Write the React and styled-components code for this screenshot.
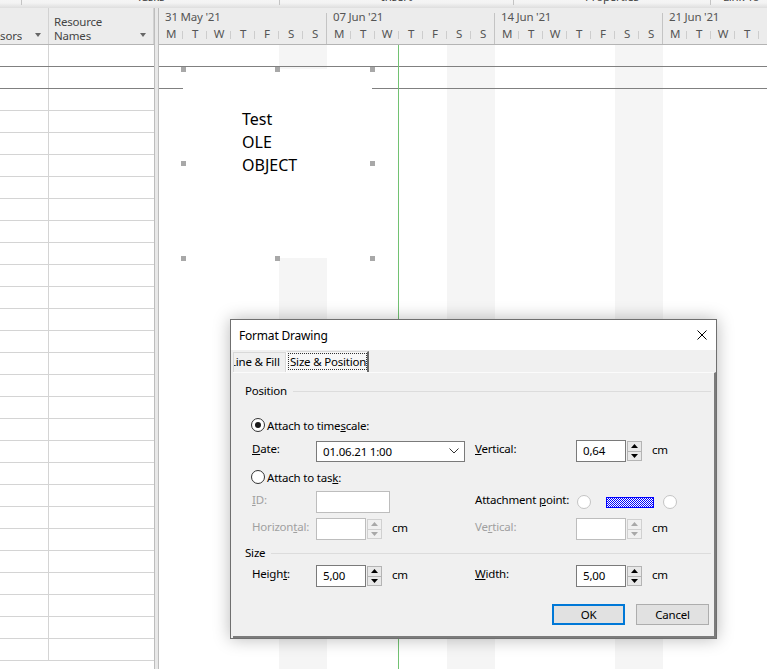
import React from 'react';
import styled, { createGlobalStyle } from 'styled-components';

const DAYS = ['M', 'T', 'W', 'T', 'F', 'S', 'S'];
const WEEKS = ["31 May '21", "07 Jun '21", "14 Jun '21", "21 Jun '21"];
const ROW_COUNT = 28;

const GlobalStyle = createGlobalStyle`
  html, body { margin: 0; padding: 0; }
  body {
    font-family: "Noto Sans", "Open Sans", sans-serif;
    background: #fff;
    color: #000;
  }
`;

function SpinButtons({ disabled }) {
  return (
    <Spin $disabled={disabled}>
      <SpinBtn $disabled={disabled}>
        <svg width="7" height="4" viewBox="0 0 7 4"><path d="M0 4 L3.5 0 L7 4 Z" fill="currentColor" /></svg>
      </SpinBtn>
      <SpinBtn $disabled={disabled}>
        <svg width="7" height="4" viewBox="0 0 7 4"><path d="M0 0 L7 0 L3.5 4 Z" fill="currentColor" /></svg>
      </SpinBtn>
    </Spin>
  );
}

function Handles() {
  const spots = [
    [0, 0], [50, 0], [100, 0],
    [0, 50], [100, 50],
    [0, 100], [50, 100], [100, 100],
  ];
  return spots.map(([x, y]) => <Handle key={`${x}-${y}`} $x={x} $y={y} />);
}

export default function App() {
  return (
    <>
      <GlobalStyle />
      <Page>
        <Ribbon>
          <RibbonGroup $w={22} />
          <RibbonGroup $w={258}><RibbonLabel>Tasks</RibbonLabel></RibbonGroup>
          <RibbonGroup $w={234}><RibbonLabel>Insert</RibbonLabel></RibbonGroup>
          <RibbonGroup $w={197}><RibbonLabel>Properties</RibbonLabel></RibbonGroup>
          <RibbonGroup $w={80} $left><RibbonLabel>Link To</RibbonLabel></RibbonGroup>
        </Ribbon>

        <Main>
          <Table>
            <TableHeader>
              <HeaderCell $w={49}>
                <ClipText><span>Predecessors</span></ClipText>
                <SortArrow />
              </HeaderCell>
              <HeaderCell $w={105}>
                <span>Resource<br />Names</span>
                <SortArrow />
              </HeaderCell>
            </TableHeader>
            {Array.from({ length: ROW_COUNT }, (_, i) => (
              <TableRow key={i} $dark={i < 2}>
                <Cell $w={49} />
                <Cell $w={105} />
              </TableRow>
            ))}
          </Table>

          <Splitter />

          <Gantt>
            <Timescale>
              {WEEKS.map((w) => (
                <Week key={w}>
                  <WeekLabel>{w}</WeekLabel>
                  <DayRow>
                    {DAYS.map((d, i) => (
                      <Day key={i} $last={i === 6}>{d}</Day>
                    ))}
                  </DayRow>
                </Week>
              ))}
            </Timescale>
            <GanttBody>
              <GanttLine />
              <GanttLine />
              <TodayLine />
              <OleObject>
                <OleText>Test<br />OLE<br />OBJECT</OleText>
                <Handles />
              </OleObject>
            </GanttBody>
          </Gantt>
        </Main>

        <Dialog>
          <TitleBar>
            <span>Format Drawing</span>
            <svg width="10" height="10" viewBox="0 0 10 10">
              <path d="M0.5 0.5 L9.5 9.5 M9.5 0.5 L0.5 9.5" stroke="#000" strokeWidth="1" />
            </svg>
          </TitleBar>
          <DialogBody>
            <TabStrip>
              <Tab>Line &amp; Fill</Tab>
              <Tab $active><FocusRect>Size &amp; Position</FocusRect></Tab>
            </TabStrip>
            <TabPanel>
              <GroupHeader $mt={11}>
                <span>Position</span>
                <GroupLine />
              </GroupHeader>

              <RadioRow $mt={17}>
                <Radio $checked />
                <span>Attach to time<u>s</u>cale:</span>
              </RadioRow>

              <FormRow $mt={5}>
                <FieldLabel><u>D</u>ate:</FieldLabel>
                <Combo>
                  <span>01.06.21 1:00</span>
                  <svg width="10" height="6" viewBox="0 0 10 6">
                    <path d="M0.5 0.5 L5 5 L9.5 0.5" fill="none" stroke="#333" strokeWidth="1" />
                  </svg>
                </Combo>
                <FieldLabel><u>V</u>ertical:</FieldLabel>
                <Control>
                  <TextBox $w={50}>0,64</TextBox>
                  <SpinButtons />
                  <Unit>cm</Unit>
                </Control>
              </FormRow>

              <RadioRow $mt={5}>
                <Radio />
                <span>Attach to tas<u>k</u>:</span>
              </RadioRow>

              <FormRow $mt={4}>
                <FieldLabel $disabled><u>I</u>D:</FieldLabel>
                <Control><TextBox $w={74} $disabled /></Control>
                <FieldLabel>Attachment <u>p</u>oint:</FieldLabel>
                <Control>
                  <Radio $light $ml={1} />
                  <Hatch />
                  <Radio $light $ml={9} />
                </Control>
              </FormRow>

              <FormRow $mt={5}>
                <FieldLabel $disabled>Horizon<u>t</u>al:</FieldLabel>
                <Control>
                  <TextBox $w={50} $disabled />
                  <SpinButtons disabled />
                  <Unit>cm</Unit>
                </Control>
                <FieldLabel $disabled>Ve<u>r</u>tical:</FieldLabel>
                <Control>
                  <TextBox $w={50} $disabled />
                  <SpinButtons disabled />
                  <Unit>cm</Unit>
                </Control>
              </FormRow>

              <GroupHeader $mt={6}>
                <span>Size</span>
                <GroupLine />
              </GroupHeader>

              <FormRow $mt={5}>
                <FieldLabel>Heigh<u>t</u>:</FieldLabel>
                <Control>
                  <TextBox $w={50}>5,00</TextBox>
                  <SpinButtons />
                  <Unit>cm</Unit>
                </Control>
                <FieldLabel><u>W</u>idth:</FieldLabel>
                <Control>
                  <TextBox $w={50}>5,00</TextBox>
                  <SpinButtons />
                  <Unit>cm</Unit>
                </Control>
              </FormRow>

              <ButtonRow>
                <Button $primary>OK</Button>
                <Button>Cancel</Button>
              </ButtonRow>
            </TabPanel>
          </DialogBody>
        </Dialog>
      </Page>
    </>
  );
}

const Page = styled.div`
  position: relative;
  width: 767px;
  height: 669px;
  overflow: hidden;
  display: flex;
  flex-direction: column;
  font-size: 11.5px;
  letter-spacing: -0.2px;
`;

/* ribbon bottom edge */
const Ribbon = styled.div`
  height: 8px;
  flex-shrink: 0;
  display: flex;
  overflow: hidden;
  background: linear-gradient(to bottom, #f5f5f5 0, #f3f3f3 3px, #dedede 8px);
`;

const RibbonGroup = styled.div`
  width: ${(p) => p.$w}px;
  flex-shrink: 0;
  height: 5px;
  border-right: 1px solid #c4c4c4;
  box-sizing: border-box;
  display: flex;
  justify-content: ${(p) => (p.$left ? 'flex-start' : 'center')};
  padding-left: ${(p) => (p.$left ? '12px' : '0')};
`;

const RibbonLabel = styled.span`
  margin-top: -9px;
  line-height: 12px;
  color: #444;
  white-space: nowrap;
`;

const Main = styled.div`
  flex: 1;
  min-height: 0;
  display: flex;
  overflow: hidden;
`;

const Table = styled.div`
  width: 154px;
  flex-shrink: 0;
  display: flex;
  flex-direction: column;
  overflow: hidden;
`;

const TableHeader = styled.div`
  height: 37px;
  flex-shrink: 0;
  display: flex;
  background: #ececec;
  border-bottom: 1px solid #b4b4b4;
  box-sizing: border-box;
  color: #444;
`;

const HeaderCell = styled.div`
  width: ${(p) => p.$w}px;
  flex-shrink: 0;
  box-sizing: border-box;
  border-right: 1px solid #d2d2d2;
  display: flex;
  align-items: flex-end;
  justify-content: space-between;
  padding: 0 7px 1px 5px;
  line-height: 14px;

  &:first-child {
    padding-left: 0;
  }
`;

const ClipText = styled.div`
  width: 22px;
  overflow: hidden;
  display: flex;
  justify-content: flex-end;

  span {
    flex-shrink: 0;
    white-space: nowrap;
  }
`;

const SortArrow = styled.span`
  width: 0;
  height: 0;
  border-left: 3.5px solid transparent;
  border-right: 3.5px solid transparent;
  border-top: 4px solid #666;
  margin-bottom: 6px;
`;

const TableRow = styled.div`
  height: 22px;
  flex-shrink: 0;
  display: flex;
  box-sizing: border-box;
  border-bottom: 1px solid ${(p) => (p.$dark ? '#808080' : '#d4d4d4')};
`;

const Cell = styled.div`
  width: ${(p) => p.$w}px;
  flex-shrink: 0;
  box-sizing: border-box;
  border-right: 1px solid #d4d4d4;

  &:last-child {
    border-right: none;
  }
`;

const Splitter = styled.div`
  width: 5px;
  flex-shrink: 0;
  box-sizing: border-box;
  background: #e8e8e8;
  border-left: 1px solid #bdbdbd;
  border-right: 1px solid #bdbdbd;
`;

const Gantt = styled.div`
  flex: 1;
  min-width: 0;
  display: flex;
  flex-direction: column;
  overflow: hidden;
`;

const Timescale = styled.div`
  height: 37px;
  flex-shrink: 0;
  display: flex;
  background: #ececec;
  border-bottom: 1px solid #b4b4b4;
  box-sizing: border-box;
  color: #555;
`;

const Week = styled.div`
  position: relative;
  width: 168px;
  flex-shrink: 0;
  display: flex;
  flex-direction: column;

  &::after {
    content: '';
    position: absolute;
    right: 0;
    top: 5px;
    bottom: 0;
    width: 1px;
    background: #c4c4c4;
  }
`;

const WeekLabel = styled.div`
  height: 18px;
  line-height: 18px;
  padding-left: 6px;
  white-space: nowrap;
`;

const DayRow = styled.div`
  height: 18px;
  display: flex;
`;

const Day = styled.div`
  position: relative;
  width: 24px;
  text-align: center;
  line-height: 16px;

  &::after {
    content: '';
    display: ${(p) => (p.$last ? 'none' : 'block')};
    position: absolute;
    right: 0;
    top: 5px;
    height: 8px;
    width: 1px;
    background: #cdcdcd;
  }
`;

const GanttBody = styled.div`
  position: relative;
  flex: 1;
  background: repeating-linear-gradient(
    to right,
    #ffffff 0,
    #ffffff 120px,
    #f5f5f5 120px,
    #f5f5f5 168px
  );
`;

const GanttLine = styled.div`
  height: 22px;
  box-sizing: border-box;
  border-bottom: 1px solid #808080;
`;

const TodayLine = styled.div`
  position: absolute;
  left: 239px;
  top: 0;
  bottom: 0;
  width: 1px;
  background: #72c272;
`;

const OleObject = styled.div`
  position: absolute;
  left: 24px;
  top: 24px;
  width: 189px;
  height: 189px;
  background: #fff;
`;

const OleText = styled.div`
  padding: 39px 0 0 59px;
  font-size: 16px;
  line-height: 23px;
  letter-spacing: 0;
  color: #000;
`;

const Handle = styled.span`
  position: absolute;
  left: calc(${(p) => p.$x}% - 2.5px);
  top: calc(${(p) => p.$y}% - 2.5px);
  width: 5px;
  height: 5px;
  background: #a8a8a8;
`;

/* dialog */
const Dialog = styled.div`
  position: absolute;
  left: 230px;
  top: 319px;
  width: 487px;
  height: 320px;
  box-sizing: border-box;
  border: 1px solid #6f6f6f;
  background: #f0f0f0;
  box-shadow: 0 0 16px rgba(0, 0, 0, 0.28);
  display: flex;
  flex-direction: column;
`;

const TitleBar = styled.div`
  height: 30px;
  flex-shrink: 0;
  background: #fff;
  display: flex;
  align-items: center;
  justify-content: space-between;
  padding: 0 9px 0 8px;
  font-size: 12px;
`;

const DialogBody = styled.div`
  flex: 1;
  display: flex;
  flex-direction: column;
  padding-left: 2px;
`;

const TabStrip = styled.div`
  height: 22px;
  flex-shrink: 0;
  display: flex;
  align-items: flex-end;
`;

const Tab = styled.div`
  box-sizing: border-box;
  height: ${(p) => (p.$active ? '21px' : '20px')};
  width: ${(p) => (p.$active ? '83px' : '53px')};
  overflow: hidden;
  white-space: nowrap;
  background: ${(p) => (p.$active ? '#f7f7f7' : '#f0f0f0')};
  border: 1px solid #d9d9d9;
  border-bottom: none;
  border-right: ${(p) => (p.$active ? '2px solid #6a6a6a' : '1px solid #d9d9d9')};
  border-left: ${(p) => (p.$active ? '1px solid #fff' : '1px solid #d9d9d9')};
  line-height: 17px;
  text-indent: ${(p) => (p.$active ? '0' : '-4px')};
  padding: ${(p) => (p.$active ? '1px 0 0 1px' : '0')};
`;

const FocusRect = styled.div`
  box-sizing: border-box;
  height: 17px;
  line-height: 15px;
  border: 1px dotted #333;
  padding-left: 1px;
  overflow: hidden;
`;

const TabPanel = styled.div`
  flex: 1;
  display: flex;
  flex-direction: column;
  border-top: 1px solid #fbfbfb;
  border-right: 2px solid #7c7c7c;
  border-bottom: 2px solid #7c7c7c;
`;

const GroupHeader = styled.div`
  margin-top: ${(p) => p.$mt}px;
  height: 14px;
  display: flex;
  align-items: center;
  padding: 0 3px 0 12px;
  line-height: 14px;
`;

const GroupLine = styled.div`
  flex: 1;
  height: 1px;
  margin-left: 6px;
  background: #dcdcdc;
`;

const RadioRow = styled.div`
  margin-top: ${(p) => p.$mt}px;
  height: 20px;
  display: flex;
  align-items: center;
  padding-left: 18px;
  gap: 2px;
`;

const Radio = styled.span`
  position: relative;
  width: 14px;
  height: 14px;
  box-sizing: border-box;
  border-radius: 50%;
  border: 1px solid ${(p) => (p.$light ? '#c4c4c4' : '#333')};
  background: #fff;
  margin-left: ${(p) => p.$ml || 0}px;
  flex-shrink: 0;

  &::after {
    content: '';
    display: ${(p) => (p.$checked ? 'block' : 'none')};
    position: absolute;
    left: 3px;
    top: 3px;
    width: 6px;
    height: 6px;
    border-radius: 50%;
    background: #1a1a1a;
  }
`;

const FormRow = styled.div`
  margin-top: ${(p) => p.$mt}px;
  height: 22px;
  display: grid;
  grid-template-columns: 64px 159px 101px auto;
  align-items: center;
  padding-left: 19px;
`;

const FieldLabel = styled.span`
  padding-bottom: 5px;
  white-space: nowrap;
  color: ${(p) => (p.$disabled ? '#a0a0a0' : '#000')};
`;

const Control = styled.div`
  display: flex;
  align-items: center;
`;

const Combo = styled.div`
  width: 149px;
  height: 21px;
  box-sizing: border-box;
  border: 1px solid #7a7a7a;
  background: #fff;
  display: flex;
  align-items: center;
  justify-content: space-between;
  padding: 0 5px 0 6px;
`;

const TextBox = styled.div`
  width: ${(p) => p.$w}px;
  height: 22px;
  box-sizing: border-box;
  border: 1px solid ${(p) => (p.$disabled ? '#bdbdbd' : '#7a7a7a')};
  background: #fff;
  padding-left: 6px;
  line-height: 20px;
`;

const Spin = styled.div`
  width: 15px;
  height: 20px;
  margin-left: 1px;
  display: flex;
  flex-direction: column;
  color: ${(p) => (p.$disabled ? '#a8a8a8' : '#000')};
`;

const SpinBtn = styled.div`
  flex: 1;
  box-sizing: border-box;
  border: 1px solid ${(p) => (p.$disabled ? '#d0d0d0' : '#b4b4b4')};
  background: ${(p) => (p.$disabled ? '#f0f0f0' : '#e8e8e8')};
  display: flex;
  align-items: center;
  justify-content: center;

  & + & {
    border-top: none;
  }
`;

const Unit = styled.span`
  margin-left: 10px;
  padding-bottom: 3px;
`;

const Hatch = styled.span`
  width: 48px;
  height: 11px;
  margin-left: 15px;
  box-sizing: border-box;
  border: 1px solid #0000ff;
  background: repeating-conic-gradient(#0000ff 0 25%, #ffffff 0 50%) 0 0 / 2px 2px;
`;

const ButtonRow = styled.div`
  margin-top: 17px;
  display: flex;
  justify-content: flex-end;
  gap: 11px;
  padding-right: 5px;
`;

const Button = styled.div`
  width: 73px;
  height: 21px;
  box-sizing: border-box;
  border: ${(p) => (p.$primary ? '2px solid #0078d7' : '1px solid #adadad')};
  background: #e1e1e1;
  display: flex;
  align-items: center;
  justify-content: center;
`;
